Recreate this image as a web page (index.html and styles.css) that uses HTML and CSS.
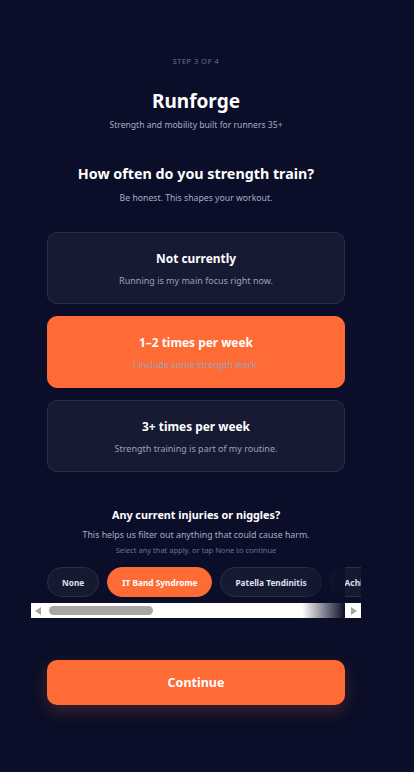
FILE: index.html
```html
<!DOCTYPE html>
<html lang="en">
<head>
<meta charset="utf-8">
<title>Runforge – Step 3 of 4</title>
<link rel="stylesheet" href="styles.css">
</head>
<body>
<main class="page">
  <p class="step">STEP 3 OF 4</p>
  <header class="brand">
    <h1 class="brand-name">Runforge</h1>
    <p class="brand-tag">Strength and mobility built for runners 35+</p>
  </header>

  <section class="question">
    <h2 class="q-title">How often do you strength train?</h2>
    <p class="q-sub">Be honest. This shapes your workout.</p>
  </section>

  <div class="options">
    <button class="option">
      <span class="opt-title">Not currently</span>
      <span class="opt-sub">Running is my main focus right now.</span>
    </button>
    <button class="option selected">
      <span class="opt-title">1–2 times per week</span>
      <span class="opt-sub">I include some strength work.</span>
    </button>
    <button class="option">
      <span class="opt-title">3+ times per week</span>
      <span class="opt-sub">Strength training is part of my routine.</span>
    </button>
  </div>

  <section class="injuries">
    <h3 class="inj-title">Any current injuries or niggles?</h3>
    <p class="inj-sub">This helps us filter out anything that could cause harm.</p>
    <p class="inj-hint">Select any that apply, or tap None to continue</p>
    <div class="chips-wrap">
      <div class="chips">
        <button class="chip">None</button>
        <button class="chip active">IT Band Syndrome</button>
        <button class="chip">Patella Tendinitis</button>
        <button class="chip">Achilles Tendinopathy</button>
        <button class="chip">Plantar Fasciitis</button>
        <button class="chip">Shin Splints</button>
        <button class="chip">Hamstring Strain</button>
        <button class="chip">Lower Back Pain</button>
        <button class="chip">Calf Strain</button>
      </div>
      <div class="hscroll" aria-hidden="true">
        <span class="arrow arrow-left"></span>
        <span class="track"><span class="thumb"></span></span>
        <span class="arrow arrow-right"></span>
      </div>
      <div class="fade"></div>
    </div>
  </section>

  <button class="continue">Continue</button>
</main>
</body>
</html>
```

FILE: styles.css
```css
* { box-sizing: border-box; }
html, body {
  margin: 0;
  background: #0b0e28;
}
body {
  font-family: "Noto Sans", "Open Sans", sans-serif;
  color: #ffffff;
  min-height: 772px;
}
.page {
  width: 330px;
  margin-left: 31px;
  padding: 56px 16px 40px;
  display: flex;
  flex-direction: column;
  align-items: stretch;
  text-align: center;
}
p, h1, h2, h3 { margin: 0; }
.step {
  font-size: 7.3px;
  letter-spacing: 0.6px;
  color: #6c7190;
  line-height: 10px;
}
.brand { margin-top: 22px; }
.brand-name {
  font-size: 19px;
  font-weight: 700;
  line-height: 26px;
}
.brand-tag {
  margin-top: 5px;
  font-size: 8.6px;
  color: #a7adc6;
  line-height: 12px;
}
.question { margin-top: 33px; }
.q-title {
  font-size: 14.3px;
  font-weight: 700;
  line-height: 20px;
}
.q-sub {
  margin-top: 8px;
  font-size: 8.7px;
  color: #a7adc6;
  line-height: 12px;
}
.options {
  margin-top: 28px;
  display: flex;
  flex-direction: column;
  gap: 12px;
}
.option {
  font-family: inherit;
  height: 72px;
  border-radius: 10px;
  background: #171a33;
  border: 1px solid #2a2e47;
  display: flex;
  flex-direction: column;
  align-items: center;
  justify-content: center;
  gap: 9px;
  padding: 0;
  cursor: pointer;
}
.option.selected {
  background: #ff6b35;
  border-color: #ff6b35;
}
.opt-title {
  font-size: 11.9px;
  font-weight: 700;
  color: #ffffff;
  line-height: 16px;
}
.opt-sub {
  font-size: 9px;
  color: #9ba1bb;
  line-height: 12px;
}
.injuries { margin-top: 35px; }
.inj-title {
  font-size: 10.8px;
  font-weight: 700;
  line-height: 16px;
}
.inj-sub {
  margin-top: 6px;
  font-size: 8.8px;
  color: #a7adc6;
  line-height: 12px;
}
.inj-hint {
  margin-top: 4px;
  font-size: 7.5px;
  color: #6c7190;
  line-height: 10px;
}
.chips-wrap {
  position: relative;
  margin: 12px -16px 0;
}
.chips {
  display: flex;
  gap: 8px;
  overflow: hidden;
  padding: 0 16px 6px;
}
.chip {
  flex: none;
  font-family: inherit;
  font-size: 8.3px;
  font-weight: 700;
  height: 30px;
  padding: 0 14px;
  border-radius: 15px;
  background: #161a31;
  border: 1px solid #2a2e47;
  color: #dde1f0;
  white-space: nowrap;
  cursor: pointer;
}
.chip.active {
  background: #ff6b35;
  border-color: #ff6b35;
  color: #ffffff;
}
.hscroll {
  display: flex;
  align-items: center;
  height: 15px;
  background: #ffffff;
}
.arrow {
  flex: none;
  width: 15px;
  height: 15px;
  display: flex;
  align-items: center;
  justify-content: center;
}
.arrow::before {
  content: "";
  border-top: 4.5px solid transparent;
  border-bottom: 4.5px solid transparent;
}
.arrow-left::before { border-right: 6px solid #a3a3a3; margin-left: -2px; }
.arrow-right::before { border-left: 6px solid #a3a3a3; margin-right: -1px; }
.track {
  flex: 1;
  height: 15px;
  display: flex;
  align-items: center;
  padding-left: 3px;
}
.thumb {
  width: 104px;
  height: 9px;
  border-radius: 5px;
  background: #a6a6a6;
}
.fade {
  position: absolute;
  top: 0;
  bottom: 0;
  right: 16px;
  width: 43px;
  background: linear-gradient(to right, rgba(11, 14, 40, 0), #0b0e28);
  pointer-events: none;
}
.continue {
  margin-top: 42px;
  height: 45px;
  border: none;
  border-radius: 10px;
  background: #ff6b35;
  color: #ffffff;
  font-family: inherit;
  font-size: 12.5px;
  font-weight: 700;
  box-shadow: 0 6px 16px rgba(255, 107, 53, 0.22);
  cursor: pointer;
}
```
